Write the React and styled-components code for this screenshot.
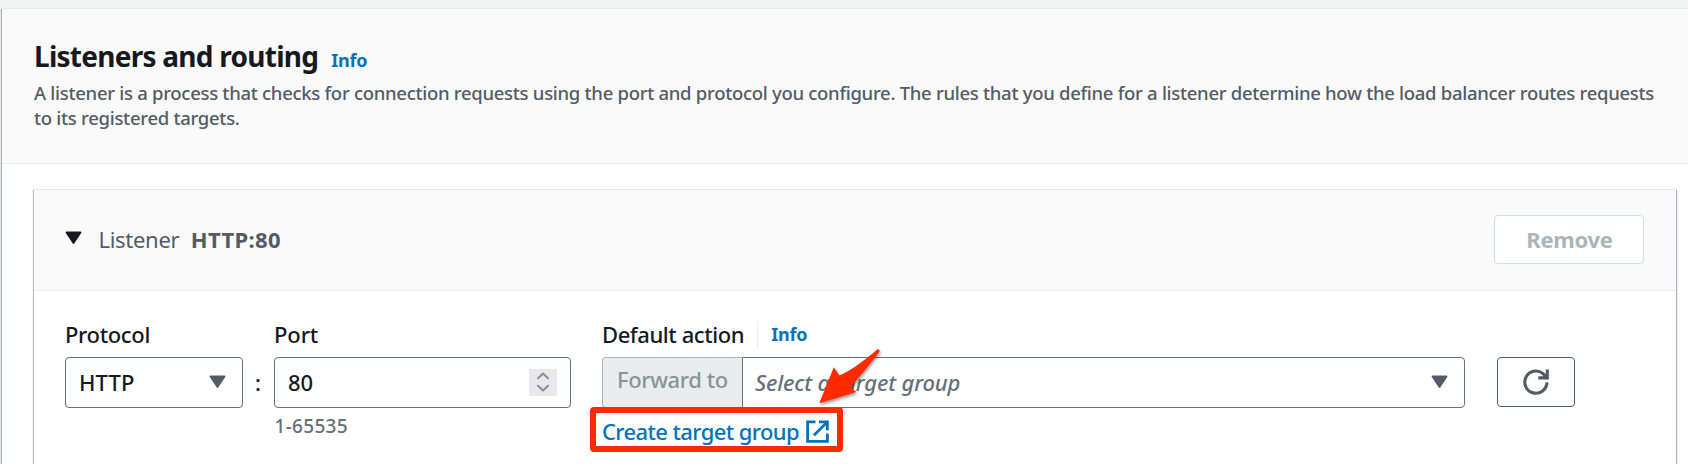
import React from 'react';
import styled, { createGlobalStyle } from 'styled-components';

const Global = createGlobalStyle`
  *, *::before, *::after { box-sizing: border-box; }
  html, body { margin: 0; height: 464px; overflow: hidden; background: #f2f3f3; }
  body { font-family: "Noto Sans", "Open Sans", sans-serif; font-size: 22px; color: #16191f; }
`;

const Page = styled.div`
  height: 464px;
  padding: 8px 0 0 2px;
  overflow: hidden;
`;

const Panel = styled.section`
  height: 480px;
  background: #fff;
  border-top: 1px solid #e6e9e9;
  box-shadow: -1px 1px 1px 0 #a9b3b4, 0 1px 1px #aab7b8;
`;

const PanelHeader = styled.header`
  height: 155px;
  padding: 28px 20px 0 32px;
  background: #fafafa;
  border-bottom: 1px solid #eaeded;
`;

const Text = styled.span`
  display: block;
  flex: none;
  margin: 0 0 0 ${(p) => p.$indent || 0}px;
  white-space: nowrap;
  font-size: ${(p) => p.$size || 22}px;
  font-weight: ${(p) => p.$weight || 500};
  font-style: ${(p) => (p.$italic ? 'italic' : 'normal')};
  letter-spacing: ${(p) => p.$track || 0}px;
  line-height: ${(p) => p.$line || 30}px;
  color: ${(p) => p.$color || '#16191f'};
`;

const TitleRow = styled.div`
  display: flex;
  align-items: baseline;
  gap: 13px;
`;

const InfoLink = styled(Text).attrs({ as: 'a' })`
  font-size: 18px;
  font-weight: 700;
  letter-spacing: -0.2px;
  line-height: 26px;
  color: #0073bb;
`;

const Description = styled.div`
  margin-top: 5px;
`;

const DescriptionLine = styled(Text)`
  font-size: 18.5px;
  line-height: 25px;
  letter-spacing: -0.292px;
  color: #545b64;
`;

const Listener = styled.section`
  height: 330px;
  margin: 25px 12px 0 32px;
  border-top: 1px solid #e6e9e9;
  background: #fff;
  box-shadow: -1px 1px 1px 0 #b9c2c3, 1px 1px 1px 0 #aab4b5;
`;

const ListenerHeader = styled.header`
  display: flex;
  align-items: center;
  height: 101px;
  padding: 0 32px 1px 31px;
  background: #fafafa;
  border-bottom: 1px solid #eaeded;
`;

const ListenerTitle = styled.div`
  display: flex;
  align-items: center;
  flex: 1;
  padding-bottom: 2px;

  svg { margin-bottom: 2px; }
`;

const RemoveButton = styled.button`
  width: 150px;
  height: 49px;
  padding: 0 0 2px 1px;
  display: flex;
  align-items: center;
  justify-content: center;
  font-family: inherit;
  background: #fff;
  border: 1px solid #d5dbdb;
  border-radius: 4px;
`;

const Form = styled.div`
  display: flex;
  align-items: flex-start;
  padding: 28px 0 0 31px;
`;

const Field = styled.div`
  width: ${(p) => p.$width}px;
  margin-right: ${(p) => p.$gap || 0}px;
  flex: none;
`;

const LabelRow = styled.div`
  display: flex;
  align-items: center;
  height: 30px;
  margin: 0 0 8px;

  & > span { margin-top: -1px; }
`;

const Divider = styled.i`
  width: 1px;
  height: 27px;
  margin: 0 13px 0 13px;
  background: #eaeded;
`;

const Control = styled.div`
  display: flex;
  align-items: center;
  justify-content: space-between;
  flex: 1;
  height: 51px;
  padding: 0 ${(p) => p.$right || 16}px 1px ${(p) => p.$left || 13}px;
  background: #fff;
  border: 1px solid #687078;
  border-radius: ${(p) => (p.$joined ? '0 4px 4px 0' : '4px')};
`;

const Group = styled.div`
  display: flex;
`;

const Prefix = styled.div`
  width: 140px;
  height: 51px;
  padding: 6px 0 0 14px;
  background: #eaeded;
  border: 1px solid #aab7b8;
  border-right: 0;
  border-radius: 4px 0 0 4px;
`;

const Colon = styled(Text)`
  width: 31px;
  margin-top: 48px;
  padding-left: 12px;
`;

const Stepper = styled.div`
  display: flex;
  align-items: center;
  justify-content: center;
  width: 28px;
  height: 27px;
  background: #e9e8ed;
`;

const RefreshButton = styled.button`
  display: flex;
  align-items: center;
  justify-content: center;
  width: 78px;
  height: 50px;
  margin-top: 38px;
  padding: 0;
  background: #fff;
  border: 1px solid #545b64;
  border-radius: 4px;
`;

const CreateLink = styled.a`
  position: relative;
  display: flex;
  align-items: center;
  gap: 7px;
  width: max-content;
  margin: 8px 0 0;
  color: #0073bb;
`;

const Highlight = styled.div`
  position: absolute;
  left: -12px;
  top: -9px;
  width: 253px;
  height: 45px;
  border: 6px solid #ff2a00;
  border-radius: 4px;
`;

const Arrow = styled.svg`
  position: absolute;
  left: 210px;
  top: -76px;
  overflow: visible;
  filter: drop-shadow(1px 2px 1.5px rgba(0, 0, 0, 0.4));
`;

const Caret = ({ color = '#545b64' }) => (
  <svg width="17" height="14" viewBox="0 0 17 14">
    <path d="M1.5 1.5h14l-7 10.5z" fill={color} stroke={color} strokeWidth="1.8" strokeLinejoin="round" />
  </svg>
);

const StepIcon = () => (
  <svg width="12" height="20" viewBox="0 0 12 20" fill="none" stroke="#908e9c" strokeWidth="2.1" strokeLinecap="round" strokeLinejoin="round">
    <path d="M1 6.2 6 1.4l5 4.8M1 13.8l5 4.8 5-4.8" />
  </svg>
);

const ExternalIcon = () => (
  <svg width="23" height="23" viewBox="0 0 23 23" fill="none" stroke="#0073bb" strokeWidth="2.8">
    <path d="M9.5 1.9H1.6v19.5h19.8v-7.9M13 1.9h8.4v8.3M21 2.2 8 15.2" />
  </svg>
);

const RefreshIcon = () => (
  <svg width="26" height="26" viewBox="0 0 26 26" fill="none" stroke="#545b64" strokeWidth="3.1">
    <path d="M24 13.4A11.1 11.1 0 1 1 19.8 4.4L23.5 8.2M24.3 .4v8.5h-9" />
  </svg>
);

export default function App() {
  return (
    <Page>
      <Global />
      <Panel>
        <PanelHeader>
          <TitleRow>
            <Text as="h1" $size={28} $weight={700} $track={-0.74} $line={38}>Listeners and routing</Text>
            <InfoLink>Info</InfoLink>
          </TitleRow>
          <Description>
            <DescriptionLine>
              A listener is a process that checks for connection requests using the port and protocol you configure. The rules that you define for a listener determine how the load balancer routes requests
            </DescriptionLine>
            <DescriptionLine>to its registered targets.</DescriptionLine>
          </Description>
        </PanelHeader>
        <Listener>
          <ListenerHeader>
            <ListenerTitle>
              <Caret color="#16191f" />
              <Text $indent={16.5} $weight={400} $track={-0.3} $color="#545b64">Listener</Text>
              <Text $indent={11.5} $weight={700} $track={0.35} $color="#545b64">HTTP:80</Text>
            </ListenerTitle>
            <RemoveButton disabled>
              <Text $weight={700} $track={-0.25} $color="#aab7b8">Remove</Text>
            </RemoveButton>
          </ListenerHeader>
          <Form>
            <Field $width={178}>
              <LabelRow><Text $track={-0.35}>Protocol</Text></LabelRow>
              <Control>
                <Text $track={0.1}>HTTP</Text>
                <Caret />
              </Control>
            </Field>
            <Colon>:</Colon>
            <Field $width={297} $gap={31}>
              <LabelRow><Text $track={-0.1}>Port</Text></LabelRow>
              <Control $right={13}>
                <Text>80</Text>
                <Stepper><StepIcon /></Stepper>
              </Control>
              <Text $indent={0.5} $size={19} $line={37} $track={0.3} $color="#687078">1-65535</Text>
            </Field>
            <Field $width={863} $gap={32}>
              <LabelRow>
                <Text $track={-0.42}>Default action</Text>
                <Divider />
                <InfoLink>Info</InfoLink>
              </LabelRow>
              <Group>
                <Prefix><Text $track={-0.4} $color="#879596">Forward to</Text></Prefix>
                <Control $joined $left={12}>
                  <Text $italic $track={-0.15} $color="#687078">Select a target group</Text>
                  <Caret />
                </Control>
              </Group>
              <CreateLink>
                <Text $track={-0.62} $color="#0073bb">Create target group</Text>
                <ExternalIcon />
                <Highlight />
                <Arrow width="80" height="70" viewBox="812 340 80 70">
                  <path d="M819.3 403.3 833.8 367.3 839.5 375.6C852 370 866 359 877.2 349.4Q879.5 349 879.7 351.2C871 363 860 376 850.5 387L856.3 392Z" fill="#ff2a00" />
                </Arrow>
              </CreateLink>
            </Field>
            <RefreshButton><RefreshIcon /></RefreshButton>
          </Form>
        </Listener>
      </Panel>
    </Page>
  );
}
